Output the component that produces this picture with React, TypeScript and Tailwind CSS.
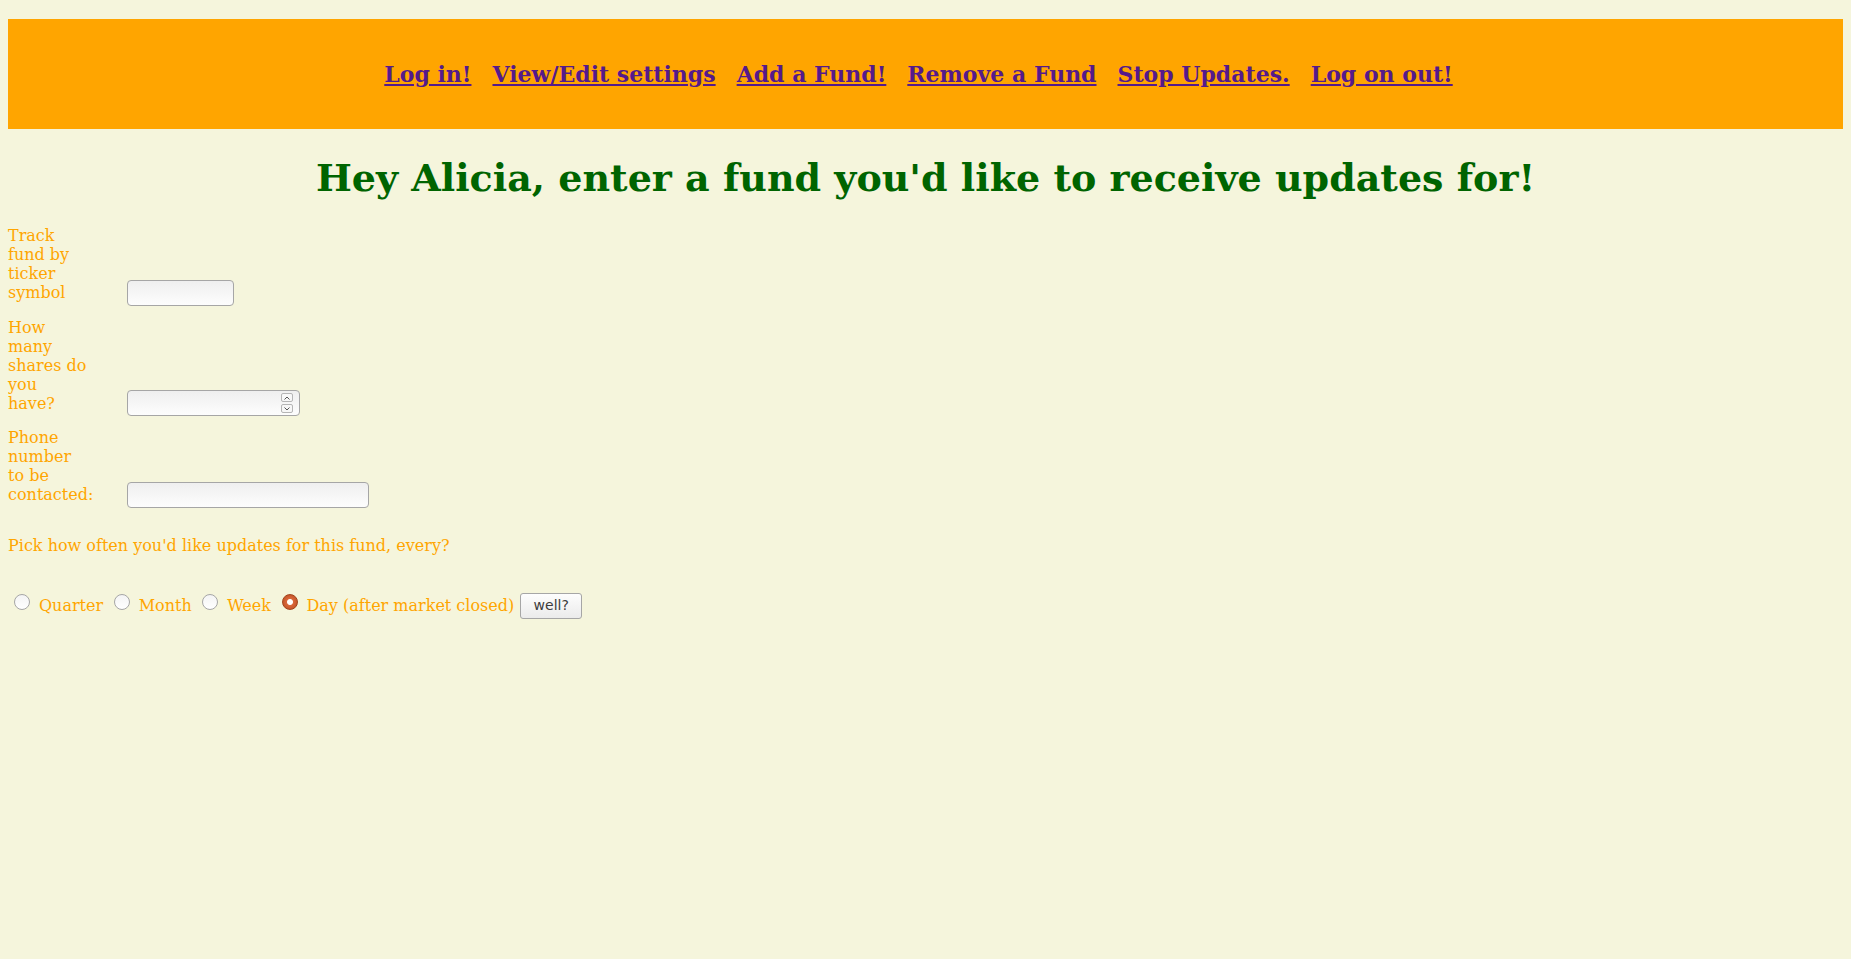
import React from "react";

const links = [
  "Log in!",
  "View/Edit settings",
  "Add a Fund!",
  "Remove a Fund",
  "Stop Updates.",
  "Log on out!",
];

const frequencies = ["Quarter", "Month", "Week", "Day (after market closed)"];

const inputCls =
  "h-[26px] rounded-[4px] border border-[#a6a6a6] bg-[linear-gradient(#efefef,#fdfdfd)] px-1 align-baseline outline-none";

export default function App() {
  return (
    <div className="min-h-screen bg-[#f5f5dc] px-2 pt-[19px] font-['DejaVu_Serif',serif] text-[16px] leading-[19px] text-[#ffa500]">
      <nav className="flex h-[110px] items-center justify-center gap-[21px] bg-[#ffa500] pr-[14px] text-[22px] font-bold leading-[26px]">
        {links.map((label) => (
          <a key={label} href="#" className="text-[#551a8b] underline">
            {label}
          </a>
        ))}
      </nav>

      <h1 className="mt-[27px] text-center text-[38px] font-bold leading-[44px] text-[#006400]">
        Hey Alicia, enter a fund you'd like to receive updates for!
      </h1>

      <form className="mt-[26px]">
        <FormRow label="Track fund by ticker symbol">
          <input type="text" className={`${inputCls} w-[107px]`} />
        </FormRow>
        <FormRow label="How many shares do you have?">
          <span className="relative inline-block align-baseline">
            <input
              type="number"
              className={`${inputCls} w-[173px] [appearance:textfield] [&::-webkit-inner-spin-button]:appearance-none`}
            />
            <span className="absolute right-[7px] top-[3px] flex flex-col gap-[2px]">
              <Spin up />
              <Spin />
            </span>
          </span>
        </FormRow>
        <FormRow label="Phone number to be contacted:">
          <input type="tel" className={`${inputCls} w-[242px]`} />
        </FormRow>

        <p className="mt-[28px]">Pick how often you'd like updates for this fund, every?</p>

        <div className="mt-[38px] flex items-center pl-[6px]">
          {frequencies.map((f, i) => (
            <label key={f} className="flex items-center">
              <input
                type="radio"
                name="freq"
                defaultChecked={i === 3}
                className="mr-[9px] mt-[-8px] h-[16px] w-[16px] appearance-none rounded-full border border-[#a6a6a6] bg-[linear-gradient(#f4f4f4,#ffffff)] checked:border-[#a2441c] checked:bg-[radial-gradient(circle,#ffffff_0_2.5px,#d9673a_3.5px,#b8481f_100%)]"
              />
              <span className="mr-[10.5px]">{f}</span>
            </label>
          ))}
          <button
            type="button"
            className="ml-[-4.5px] h-[26px] w-[62px] rounded-[3px] border border-[#a6a6a6] bg-[linear-gradient(#fdfdfd,#ebebeb)] font-['DejaVu_Sans',sans-serif] text-[14px] font-normal text-[#3c3c3c]"
          >
            well?
          </button>
        </div>
      </form>
    </div>
  );
}

type FormRowProps = {
  label: string;
  children: React.ReactNode;
};

const FormRow = ({ label, children }: FormRowProps) => {
  return (
    <div className="mb-[12px]">
      <label className="inline-block w-[79px] align-baseline">{label}</label>
      <span className="ml-[40px]">{children}</span>
    </div>
  );
};

const Spin = ({ up }: { up?: boolean }) => (
  <span className="flex h-[9px] w-[12px] items-center justify-center rounded-[2px] border border-[#b5b5b5] bg-[#f7f7f7]">
    <svg width="6" height="4" viewBox="0 0 6 4" fill="none" stroke="#555" strokeWidth="1">
      {up ? <path d="M0.5 3.5 L3 1 L5.5 3.5" /> : <path d="M0.5 0.5 L3 3 L5.5 0.5" />}
    </svg>
  </span>
);
